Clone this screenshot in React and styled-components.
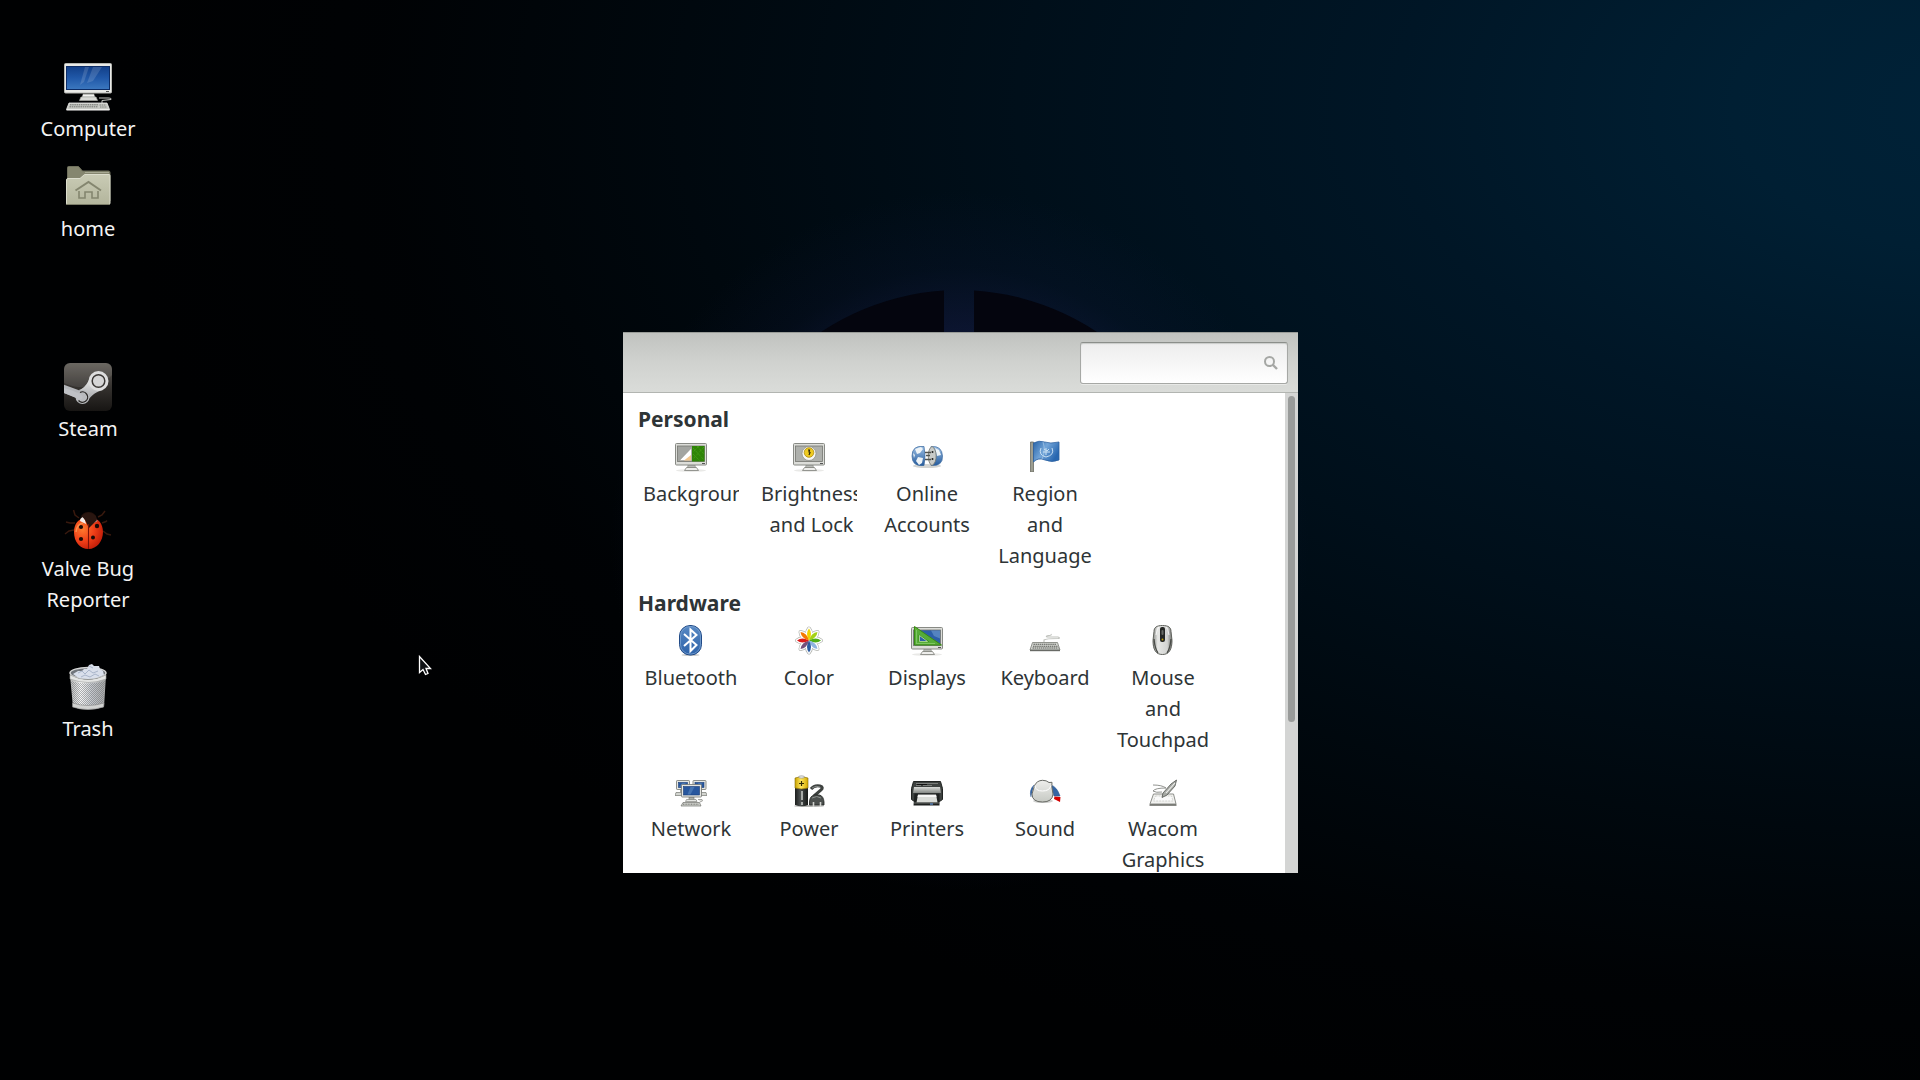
import React from "react";
import styled, { createGlobalStyle } from "styled-components";

const GlobalStyle = createGlobalStyle`
  *, *::before, *::after { box-sizing: border-box; }
  html, body, #root { height: 100%; }
  body {
    margin: 0;
    overflow: hidden;
    background: #000;
    font-family: "Noto Sans", "Open Sans", sans-serif;
    font-size: 20px;
    line-height: 31px;
  }
  button { font: inherit; color: inherit; }
`;

/* ---------- desktop ---------- */

const Desktop = styled.main`
  position: relative;
  width: 100%;
  height: 100vh;
  overflow: hidden;
  background:
    radial-gradient(circle 350px at 50% 541px, rgba(32, 34, 92, 0.5) 0, rgba(28, 32, 84, 0.42) 60%, rgba(20, 28, 70, 0.16) 78%, rgba(10, 20, 50, 0) 100%),
    radial-gradient(ellipse 98% 96% at 104% 10%, #002238 0, #001f33 14%, #001626 32%, #000f1a 52%, #00080e 70%, rgba(0, 3, 6, 0.6) 86%, rgba(0, 1, 2, 0) 100%),
    #000102;
`;

const Emblem = styled.svg`
  position: absolute;
  top: 290px;
  left: calc(50% - 252px);
  width: 502px;
  height: 502px;
`;

const Launcher = styled.button`
  position: absolute;
  left: 32px;
  top: ${(p) => p.$top}px;
  width: 112px;
  display: flex;
  flex-direction: column;
  align-items: center;
  gap: 2px;
  padding: 0;
  border: 0;
  background: none;
  color: #f4f4f4;
  text-align: center;
`;

const Pointer = styled.svg`
  position: absolute;
  left: 418px;
  top: 655px;
  width: 14px;
  height: 21px;
`;

/* ---------- settings window ---------- */

const Window = styled.section`
  position: absolute;
  left: calc(50% - 337px);
  top: 332px;
  width: 675px;
  height: 541px;
  display: flex;
  flex-direction: column;
  background: #fff;
  color: #2e3436;
`;

const Toolbar = styled.header`
  flex: none;
  display: flex;
  justify-content: flex-end;
  align-items: center;
  height: 61px;
  padding: 0 10px;
  border-top: 1px solid #999c98;
  border-bottom: 1px solid #b2b5b1;
  background: linear-gradient(#c1c3c0, #d0d2cf 50%, #dadcd9);
`;

const SearchBox = styled.label`
  display: flex;
  align-items: center;
  width: 208px;
  height: 42px;
  padding: 0 9px;
  border: 1px solid #a6a8a5;
  border-top-color: #8b8e8a;
  border-radius: 3px;
  background: linear-gradient(#ededed, #fff);
  box-shadow: inset 0 1px 1px #c8cac8, 0 1px 0 #e8e9e7;
  svg { flex: none; }
`;

const SearchInput = styled.input`
  flex: 1;
  min-width: 0;
  padding: 0;
  border: 0;
  outline: 0;
  background: none;
  font: inherit;
`;

const Body = styled.div`
  flex: 1;
  min-height: 0;
  display: flex;
`;

const Content = styled.div`
  flex: 1;
  min-width: 0;
  overflow: hidden;
  display: flex;
  flex-direction: column;
  gap: 17px;
  padding: 11px 15px 0;
`;

const Group = styled.section`
  display: flex;
  flex-direction: column;
  gap: 5px;
`;

const GroupTitle = styled.h2`
  margin: 0;
  font-size: 21px;
  line-height: 31px;
  font-weight: 700;
`;

const Grid = styled.div`
  display: grid;
  grid-template-columns: repeat(5, 96px);
  gap: 20px 22px;
  padding-left: 5px;
`;

const Panel = styled.button`
  display: flex;
  flex-direction: column;
  align-items: center;
  gap: 6px;
  min-width: 0;
  padding: 0;
  border: 0;
  background: none;
`;

const Caption = styled.span`
  display: block;
  width: 100%;
  overflow: hidden;
  text-align: center;
`;

const CaptionText = styled.span`
  display: block;
  width: min-content;
  min-width: 100%;
`;

const Trough = styled.div`
  flex: none;
  width: 13px;
  padding: 3px;
  background: #d4d5d4;
`;

const Thumb = styled.div`
  height: 326px;
  border-radius: 4px;
  background: #999b9a;
`;

/* ---------- drawings ---------- */

const Big = ({ children }) => (
  <svg width="48" height="48" viewBox="0 0 48 48" aria-hidden="true">{children}</svg>
);
const Small = ({ children }) => (
  <svg width="32" height="32" viewBox="0 0 32 32" aria-hidden="true">{children}</svg>
);
const Fade = ({ id, from, to, x2 = 0, y2 = 1, mid }) => (
  <linearGradient id={id} x1="0" y1="0" x2={x2} y2={y2}>
    <stop offset="0" stopColor={from} />
    {mid && <stop offset=".5" stopColor={mid} />}
    <stop offset="1" stopColor={to} />
  </linearGradient>
);

const ComputerIcon = () => (
  <Big>
    <defs>
      <Fade id="pcScreen" from="#123f88" mid="#2058a8" to="#3c78bf" />
      <Fade id="pcBase" from="#8a8c88" mid="#f2f2f0" to="#c0c2be" />
    </defs>
    <rect x=".5" y=".5" width="47" height="29.5" rx="1" fill="#e9eae7" stroke="#b5b7b2" />
    <rect x="2.5" y="3.5" width="43" height="23" fill="url(#pcScreen)" stroke="#0c2c66" />
    <path d="M21 4h4l-5 15-4 3zM29 4h9l-9 14-6 2z" fill="#fff" opacity=".14" />
    <path d="M42 28.500h3" stroke="#555" />
    <path d="M19 30.500h11l1 4h-13z" fill="url(#pcBase)" />
    <path d="M17 34h15l1.500 3.500h-18z" fill="#d9dad7" stroke="#a7a9a4" strokeWidth=".7" />
    <path d="M38 40v-2.500l9-1c1-1-1-1.500-3-1.500h-9" fill="none" stroke="#c4c6c2" />
    <path d="M5 40h38l2.500 6.500h-43z" fill="#c6c8c3" stroke="#eeeeec" strokeWidth=".8" />
    <path d="M6 41.800h28M5.500 43.800h28" stroke="#6f716d" strokeDasharray="1.500 .7" />
    <path d="M35.500 42h6M36 44h7" stroke="#838581" strokeDasharray="1.500 .7" />
    <path d="M2.500 46.800h43" stroke="#f4f4f2" strokeWidth="1.200" />
  </Big>
);

const HomeIcon = () => (
  <Big>
    <defs><Fade id="folder" from="#c9cbb5" to="#b3b59c" /></defs>
    <path d="M3.500 38V4.500q0-1 1-1h10l4 4.500h26q1.500 0 1.500 1.500V38z" fill="#85866f" stroke="#6f705c" />
    <path d="M21 9.500h24" stroke="#a9aa95" />
    <path d="M2.500 17q0-1.500 1.500-1.500h12l4.500-4H45q1 0 1 1V40q0 1.500-1.500 1.500h-41q-1 0-1-1.500z" fill="url(#folder)" stroke="#dcddcd" />
    <path d="M2 41.500h44" stroke="#7c7d69" />
    <path d="M11.500 27.500 24.500 19l12.500 8.500" fill="none" stroke="#84866f" strokeWidth="2" />
    <path d="M15 28v7h6v-6h7v6h6v-7" fill="none" stroke="#84866f" strokeWidth="1.600" />
  </Big>
);

const SteamIcon = () => (
  <Big>
    <defs>
      <Fade id="steamBg" from="#5f5b55" mid="#35322f" to="#171513" />
      <Fade id="steamArm" from="#e6e6e6" to="#a3a5a8" />
      <clipPath id="steamClip"><rect width="48" height="48" rx="6" /></clipPath>
    </defs>
    <g clipPath="url(#steamClip)">
      <rect width="48" height="48" fill="url(#steamBg)" />
      <path d="M0 0h48v12C38 24 16 28 0 20z" fill="#fff" opacity=".08" />
      <path d="M-1 21.500 17 28l-1 8-17-6.500z" fill="#b4b6ba" />
      <path d="m25 17 14 10c-7 2-10 4-15 10L15 27q6-2 10-10z" fill="url(#steamArm)" />
      <circle cx="18.500" cy="34" r="7" fill="#b9bbbe" />
      <path d="M16 29.500a5.200 5.200 0 1 1-1.500 8" fill="none" stroke="#2b2927" strokeWidth="1.300" />
      <path d="m8 27.500 8 3.500q4 2 2 5-2 1.500-6-1L0 30v-5z" fill="#bfc1c5" />
      <circle cx="34.500" cy="18" r="10" fill="#dedede" />
      <circle cx="34.500" cy="18" r="6.300" fill="#d6d6d6" stroke="#3b3835" strokeWidth="1.500" />
    </g>
  </Big>
);

const BugIcon = () => (
  <Big>
    <defs>
      <radialGradient id="bug" cx=".3" cy=".35" r=".8">
        <stop offset="0" stopColor="#ff7a2e" /><stop offset=".5" stopColor="#f03f18" /><stop offset="1" stopColor="#b81706" />
      </radialGradient>
    </defs>
    <path d="M15 15 11 12 9.500 7M34 14l4-2 3-4M11 20H6l-4-1M38 20l4-1.500 1-1M10 27l-5 1-4 3M39 28l4 3 4 1" fill="none" stroke="#38190e" strokeWidth="1.500" />
    <path d="M16.500 17c0-5 3-8 8-8s8 3 8 8l-7 8z" fill="#24110b" />
    <path d="M25 16c7-3 14 3 14 13 0 9-6 17-14.500 17S10 39 10 29c0-10 7-16 15-13z" fill="url(#bug)" />
    <path d="M19 14q-3 1-3 4l6 3-1-4z" fill="#f5efec" />
    <path d="M31 14l2.500 4-4 2z" fill="#b9aaa4" />
    <path d="M18 13q6-7 14 0l1 4-8 8-4-8z" fill="#2a1610" />
    <path d="M24.500 21v25" stroke="#7c1208" strokeWidth="1.100" />
    <g fill="#1c0b07"><circle cx="17" cy="24" r="2.100" /><circle cx="33" cy="23" r="2.200" /><circle cx="17" cy="36" r="2.100" /><circle cx="29" cy="34.500" r="2" /></g>
    <path d="M12 29q1-8 7-9" stroke="#ffb06b" strokeWidth="1.500" fill="none" opacity=".6" />
  </Big>
);

const TrashIcon = () => (
  <Big>
    <defs>
      <linearGradient id="bin" x1="0" x2="1"><stop offset="0" stopColor="#b5b6b5" /><stop offset=".3" stopColor="#f6f6f6" /><stop offset=".6" stopColor="#c6c9ce" /><stop offset="1" stopColor="#a5a6a6" /></linearGradient>
      <pattern id="mesh" width="2" height="2" patternUnits="userSpaceOnUse"><path d="M0 0h1v1H0zM1 1h1v1H1z" fill="#666a6e" opacity=".5" /></pattern>
    </defs>
    <ellipse cx="24" cy="10" rx="18" ry="5.500" fill="#70757b" stroke="#d5d6d6" strokeWidth="1.500" />
    <path d="m9 11 5-3 4 0 2-2 3 0 2-4 3-1 2 2 5 0 1 3 3 2 1 4-10 4-14 0z" fill="#d9dfeb" />
    <path d="m14 10 4-2 3 3 4-4 4 3 5-2M17 14l4-2 5 2 5-3 4 2M25 3l4 2" fill="none" stroke="#a9b5ca" strokeWidth="1" />
    <path d="M6 12q18 10 36 0l-2 32q-16 5-31 0z" fill="url(#bin)" />
    <path d="M7 18q17 5 34 0l-2 24q-15 4-30 0z" fill="url(#mesh)" />
    <path d="M6 12v4q18 7 36 0v-4q-18 9-36 0z" fill="#e4e5e4" stroke="#9c9e9c" strokeWidth=".6" />
    <path d="M8.500 40v4q15 5 31 0l.500-4q-16 5-31.500 0z" fill="#d1d2d1" stroke="#858585" strokeWidth=".6" />
  </Big>
);

const SmallMonitor = ({ children, screen }) => (
  <>
    <ellipse cx="16" cy="30.500" rx="15" ry="1.500" fill="#e9e9e7" />
    <path d="M13 25h7l.5 3h-8z" fill="#b9bbb7" stroke="#85877f" strokeWidth=".6" />
    <path d="M11.500 27.500h10l2 3h-14z" fill="#eeeeec" stroke="#7d7f79" strokeWidth=".8" />
    <rect x=".5" y="3.500" width="31" height="21.500" rx="1" fill="#dcddd9" stroke="#888a85" />
    <rect x="2.500" y="6" width="27" height="15.500" fill={screen} stroke="#747671" strokeWidth=".8" />
    <path d="M27 23.500h3" stroke="#555" />
    {children}
  </>
);

const BackgroundIcon = () => (
  <Small>
    <SmallMonitor screen="#a3a5a1">
      <path d="M17 6h12.500v15.500H17z" fill="#2f8408" />
      <path d="m18 8 11 12M18 14l7 7M22 6l7 8M29 7 18 19M24 6l-6 6" stroke="#49a31a" strokeWidth="1" strokeDasharray="1 1" />
      <path d="M4.500 20.500 16.500 8v12.500z" fill="#fff" stroke="#8f8f88" strokeWidth=".5" />
      <path d="m9 20.500 7-5.500v5.500z" fill="#f3c78d" />
    </SmallMonitor>
  </Small>
);

const BrightnessIcon = () => (
  <Small>
    <SmallMonitor screen="#aeb0ac">
      <circle cx="16" cy="13.500" r="7" fill="#f7f7f5" stroke="#898b85" strokeWidth=".7" />
      <circle cx="16" cy="12.500" r="4.800" fill="#efcb21" stroke="#ae8c0e" strokeWidth=".8" />
      <path d="M15 10h1.500l-.5 2 1 .5-1 2.500" fill="none" stroke="#2b2505" strokeWidth="1.200" />
    </SmallMonitor>
  </Small>
);

const OnlineIcon = () => (
  <Small>
    <defs><Fade id="globeL" from="#9ec1e6" to="#245a9c" /></defs>
    <ellipse cx="16" cy="26" rx="14" ry="2" fill="#d3d4d2" />
    <path d="M13 6.500Q15 16 13 25.500 1 27 1 16T13 6.500z" fill="url(#globeL)" stroke="#3b689e" strokeWidth=".7" />
    <path d="m4 9 6-2 2 2-3 4-3 1zM7 17l5 1-1 5-3 2-3-4zM2 13l2 2-1 3z" fill="#eef3f6" />
    <path d="M20 6.500q11-1 11.500 9.500T20 25.500z" fill="url(#globeL)" stroke="#3b689e" strokeWidth=".7" />
    <path d="m24 8 4 2 2 5-4 1z" fill="#eef3f6" />
    <path d="M21 6.500c5 2 6 16 0 19-5-2-5-17 0-19z" fill="#c9cbc8" stroke="#73766f" strokeWidth=".8" />
    <path d="M14 12.500h6M14 19.500h6M15 15.500h4" stroke="#51534f" strokeWidth="1.500" />
    <circle cx="21.500" cy="12" r="1" fill="#222" /><circle cx="21.500" cy="19" r="1" fill="#222" />
  </Small>
);

const RegionIcon = () => (
  <Small>
    <defs><Fade id="flag" from="#2864a8" mid="#73a5d8" to="#2867b0" x2={1} y2={0.5} /></defs>
    <path d="M1.500 2h3v30h-3z" fill="#9c9d91" stroke="#6b6c63" strokeWidth=".8" />
    <path d="M4.500 3Q10 0 15.500 2t14.500 0v18q-7 3-14 0t-11.500 2z" fill="url(#flag)" stroke="#2b5f9f" strokeWidth=".8" />
    <path d="M14 2q3 9-1 17" stroke="#b4d2ee" strokeWidth="1" opacity=".6" fill="none" />
    <path d="M12 8q-3 7 5 9 9-2 6-9M15 9l3 2 2-2M17 8v7M14 12h7" stroke="#c8e0f3" fill="none" strokeWidth="1" />
  </Small>
);

const BluetoothIcon = () => (
  <Small>
    <defs><Fade id="bt" from="#5889c4" to="#2d62a9" /></defs>
    <ellipse cx="15.500" cy="31" rx="9" ry="1" fill="#c8c9c8" />
    <rect x="4.500" y="1.500" width="22" height="29.500" rx="10.500" fill="url(#bt)" stroke="#204a87" />
    <rect x="5.500" y="2.500" width="20" height="27.500" rx="9.500" fill="none" stroke="#83a9d6" strokeWidth=".7" />
    <path d="m9 10 12.500 11-6 6V5.500l6 5.500L9 22" fill="none" stroke="#fff" strokeWidth="2" />
  </Small>
);

const petals = ["#edd400", "#a4d216", "#4fae14", "#8fb4e0", "#2a5aa0", "#75507b", "#dc1c1c", "#f57900"];
const petalShape = "M0 0Q-4-7 0-12 4-7 0 0z";
const ColorIcon = () => (
  <Small>
    <g transform="translate(16 16.500)" strokeLinejoin="round">
      <g fill="#fff" stroke="#b4b6b1" strokeWidth="4">
        {petals.map((c, i) => <path key={c} transform={`rotate(${i * 45})`} d={petalShape} />)}
      </g>
      <g fill="#fff" stroke="#fff" strokeWidth="2.600">
        {petals.map((c, i) => <path key={c} transform={`rotate(${i * 45})`} d={petalShape} />)}
      </g>
      {petals.map((c, i) => <path key={c} transform={`rotate(${i * 45})`} d={petalShape} fill={c} />)}
    </g>
  </Small>
);

const DisplaysIcon = () => (
  <Small>
    <SmallMonitor screen="#2c5fa8">
      <path d="M20 6.500h9v8L23 12z" fill="#6f9bd0" opacity=".6" />
      <path d="M3.500 2.500v18.500h27z M8 11v6.500h9.500z" fill="#58b22f" fillOpacity=".93" fillRule="evenodd" stroke="#3a8a12" />
      <path d="M5.500 6.500v13h19" fill="none" stroke="#b3e596" strokeWidth=".9" strokeDasharray="1 1" />
      <path d="M8.500 11.500v6h8z" fill="none" stroke="#cdf0b8" strokeWidth=".7" />
    </SmallMonitor>
  </Small>
);

const KeyboardIcon = () => (
  <Small>
    <path d="M15 18v-2q2-1.500 14-1.500 3-.5 0-1.500H18q-2-1 2-1.500 3 0 2-1.500" fill="none" stroke="#bfc1bc" strokeWidth="1.100" />
    <path d="M3.500 18.500h25l2.500 7.500H1z" fill="#d3d5d0" stroke="#7a7c76" strokeWidth=".8" />
    <path d="M4.500 20.300h23M4 22.200h24.500M3.500 24h26" stroke="#5a5c57" strokeWidth="1.100" strokeDasharray="1.500 .6" />
    <path d="M1 26.500h30" stroke="#686a65" strokeWidth="1.400" />
  </Small>
);

const MouseIcon = () => (
  <Small>
    <defs>
      <linearGradient id="mouse" x1="0" x2="1"><stop offset="0" stopColor="#8b8d89" /><stop offset=".25" stopColor="#e6e7e5" /><stop offset=".75" stopColor="#d3d4d2" /><stop offset="1" stopColor="#71736f" /></linearGradient>
    </defs>
    <path d="M15.500 1.500c6 0 8.500 2 8.500 6l1 9c0 9-3 14-9.500 14S6 26 6 16.500l1-9c0-4 2.500-6 8.500-6z" fill="url(#mouse)" stroke="#5f615c" />
    <path d="M7 15q1 10 4 14M24 15q-1 10-4 14" stroke="#4a4c48" strokeWidth="1.300" fill="none" />
    <path d="M9 11q1-7 3-8M22 11q-1-7-3-8" stroke="#fff" strokeWidth=".8" fill="none" />
    <rect x="13" y="3" width="5" height="15" rx="2" fill="#242624" />
    <rect x="14.500" y="6" width="2" height="5" rx="1" fill="#686a66" />
    <circle cx="15.500" cy="15.500" r=".9" fill="#c4a000" />
  </Small>
);

const MiniPc = ({ x, y, w, h }) => (
  <>
    <rect x={x} y={y} width={w} height={h} rx=".7" fill="#e6e7e3" stroke="#747671" strokeWidth=".8" />
    <rect x={x + 2} y={y + 2} width={w - 4} height={h - 4} fill="#28579e" stroke="#163b77" strokeWidth=".6" />
    <path d={`M${x + w / 2 - 1} ${y + 2.500}h4l-4 ${h - 5}h-3z`} fill="#729fcf" opacity=".4" />
  </>
);
const NetworkIcon = () => (
  <Small>
    <path d="M1 17.500h9v3H0zM23 17.500h8l1 3h-9z" fill="#d3d5d0" stroke="#777973" strokeWidth=".7" />
    <path d="M5 14h4v3H5zM23 14h4v3h-4z" fill="#a0a29d" />
    <MiniPc x={1.5} y={5.5} w={13} h={9} />
    <MiniPc x={18} y={5.500} w={13} h={9} />
    <path d="M14 22h5v3h-5z" fill="#aeb0ab" stroke="#73756f" strokeWidth=".6" />
    <path d="M11.500 24.500h9.500l1 2H10.500zM25 27q4-1 2-2.500h-4" fill="#e5e6e3" stroke="#858781" strokeWidth=".7" />
    <MiniPc x={6.500} y={9.500} w={20} h={12.500} />
    <path d="M8 27.500h16.500l1.500 3.500H6z" fill="#d1d3ce" stroke="#71736d" strokeWidth=".7" />
    <path d="M8 29.200h16" stroke="#70726d" strokeDasharray="1 .6" />
  </Small>
);

const PowerIcon = () => (
  <Small>
    <defs>
      <linearGradient id="cell" x1="0" x2="1"><stop offset="0" stopColor="#c9a200" /><stop offset=".45" stopColor="#ffe75e" /><stop offset="1" stopColor="#d3a900" /></linearGradient>
      <linearGradient id="cellDark" x1="0" x2="1"><stop offset="0" stopColor="#1c1e1d" /><stop offset=".4" stopColor="#4b4f4f" /><stop offset="1" stopColor="#161817" /></linearGradient>
    </defs>
    <ellipse cx="16" cy="31" rx="15" ry="1" fill="#b5b6b4" />
    <path d="M2 12h13v18q-6 2.500-13 0z" fill="url(#cellDark)" />
    <path d="M2 3q6.500-3 13 0v10q-6.500 2-13 0z" fill="url(#cell)" stroke="#856b08" strokeWidth=".6" />
    <ellipse cx="8.500" cy="2" rx="3" ry="1.200" fill="#e8e9e6" stroke="#777" strokeWidth=".5" />
    <path d="M8.500 6v5M6 8.500h5" stroke="#332b00" strokeWidth="1.200" />
    <path d="M9 16v9M9 27v3" stroke="#a7aaa7" strokeWidth="2" />
    <path d="M18 14q3-4 9-3 4 1 1 4l-7 6" fill="none" stroke="#3e4240" strokeWidth="3" />
    <path d="M19 13q4-3 8-1" fill="none" stroke="#8d918e" strokeWidth=".9" />
    <path d="M16.500 27q0-6 5-7h5q4 1 4.500 7v3h-14.500z" fill="#4c504e" stroke="#1f2220" strokeWidth=".8" />
    <path d="M19 23q5-3 9 0" stroke="#8a8e8b" fill="none" />
    <path d="M20.500 27v5M27.500 27v5" stroke="#cfd1cd" strokeWidth="1.600" />
  </Small>
);

const PrintersIcon = () => (
  <Small>
    <defs><Fade id="prn" from="#d9dbd8" to="#858985" /></defs>
    <path d="M2.500 6.500h27l2 7v11l-3 2h-25l-3-2v-11z" fill="#3d413f" stroke="#202321" />
    <path d="M3 12h26l1 6H2z" fill="url(#prn)" />
    <path d="M5 8.500h22M5 10.500h5M12 10.500h9" stroke="#8a8d89" strokeWidth=".8" />
    <path d="M6 9.500h10" stroke="#111" />
    <path d="M3.500 18.500h25v12h-26z" fill="#1e2120" />
    <path d="M7 19.500h18l1.500 8H5.500z" fill="#dadcd8" />
    <path d="M7 20h18l.5 2h-19z" fill="#f7f7f6" />
    <path d="M3 28h25" stroke="#686c68" /><path d="M19 29h3" stroke="#5d8bc9" strokeWidth="1.300" />
  </Small>
);

const SoundIcon = () => (
  <Small>
    <defs><Fade id="knob" from="#eeeeec" to="#c6c9c3" /></defs>
    <path d="M2 22Q0 15 5 10M22 10q6 2 9 11l-6 0q-1-5-5-7z" fill="#3465a4" stroke="#2a5592" strokeWidth=".6" />
    <path d="m25.500 21.500 6 .5-.5 5-6-3z" fill="#d40000" />
    <ellipse cx="14" cy="26" rx="10" ry="2" fill="#d1d2d0" />
    <path d="M5.500 10.500Q8 5.500 13.500 5.300q4 0 6.500 2.200l3-.2-.2 4.200 1.200 7.500q-.5 8-10.500 8-10.500 0-10.500-8z" fill="url(#knob)" stroke="#686a65" />
    <path d="M6 11q.5 5 7.500 5 7 0 8.500-5.500" fill="none" stroke="#fff" strokeWidth="1" />
  </Small>
);

const WacomIcon = () => (
  <Small>
    <path d="M6.500 19h20l2.500 10H3z" fill="#f2f2f0" stroke="#8d8f8a" />
    <path d="M8.500 21h16l1.500 5H6.500z" fill="#fafafa" stroke="#c3c5c0" strokeWidth=".7" strokeDasharray="2 1" />
    <path d="M2.500 30h27" stroke="#60625d" strokeWidth="1.500" />
    <path d="M6 10q9 0 13 3-11 0-13 3 3 2 9 1" fill="none" stroke="#858782" strokeWidth=".9" />
    <path d="M29.500 5 28 11l-8 9-5 2.500 1-4.500 8-9z" fill="#a7aaa5" stroke="#50534e" strokeWidth=".8" />
    <path d="m28 8-9 10" stroke="#f2f2f0" strokeWidth="1.100" />
  </Small>
);

/* ---------- data ---------- */

const launchers = [
  { name: "Computer", top: 63, Icon: ComputerIcon },
  { name: "home", top: 163, Icon: HomeIcon },
  { name: "Steam", top: 363, Icon: SteamIcon },
  { name: "Valve Bug Reporter", top: 503, Icon: BugIcon },
  { name: "Trash", top: 663, Icon: TrashIcon },
];

const groups = [
  {
    title: "Personal",
    panels: [
      ["Background", BackgroundIcon],
      ["Brightness and Lock", BrightnessIcon],
      ["Online Accounts", OnlineIcon],
      ["Region and Language", RegionIcon],
    ],
  },
  {
    title: "Hardware",
    panels: [
      ["Bluetooth", BluetoothIcon],
      ["Color", ColorIcon],
      ["Displays", DisplaysIcon],
      ["Keyboard", KeyboardIcon],
      ["Mouse and Touchpad", MouseIcon],
      ["Network", NetworkIcon],
      ["Power", PowerIcon],
      ["Printers", PrintersIcon],
      ["Sound", SoundIcon],
      ["Wacom Graphics", WacomIcon],
    ],
  },
];

export default function App() {
  return (
    <>
      <GlobalStyle />
      <Desktop>
        <Emblem viewBox="0 0 502 502" aria-hidden="true">
          <path d="M236 0.500A251 251 0 0 0 236 501.500zM266 0.500A251 251 0 0 1 266 501.500z" fill="#04050e" />
        </Emblem>

        {launchers.map(({ name, top, Icon }) => (
          <Launcher key={name} type="button" $top={top}>
            <Icon />
            {name}
          </Launcher>
        ))}

        <Window>
          <Toolbar>
            <SearchBox>
              <SearchInput type="text" aria-label="Search" />
              <svg width="14" height="14" viewBox="0 0 14 14" aria-hidden="true">
                <circle cx="5.500" cy="5.500" r="4.500" fill="none" stroke="#a5a7a4" strokeWidth="2" />
                <path d="m8.500 8.500 4.500 4.500" stroke="#a5a7a4" strokeWidth="2.400" />
              </svg>
            </SearchBox>
          </Toolbar>
          <Body>
            <Content>
              {groups.map(({ title, panels }) => (
                <Group key={title}>
                  <GroupTitle>{title}</GroupTitle>
                  <Grid>
                    {panels.map(([name, Icon]) => (
                      <Panel key={name} type="button">
                        <Icon />
                        <Caption><CaptionText>{name}</CaptionText></Caption>
                      </Panel>
                    ))}
                  </Grid>
                </Group>
              ))}
            </Content>
            <Trough><Thumb /></Trough>
          </Body>
        </Window>

        <Pointer viewBox="0 0 14 21" aria-hidden="true">
          <path d="M1.500 1.500v16l3.500-3 2.500 5 2.500-1-2-5h4.500z" fill="#101316" stroke="#fff" strokeWidth="1.300" />
        </Pointer>
      </Desktop>
    </>
  );
}
